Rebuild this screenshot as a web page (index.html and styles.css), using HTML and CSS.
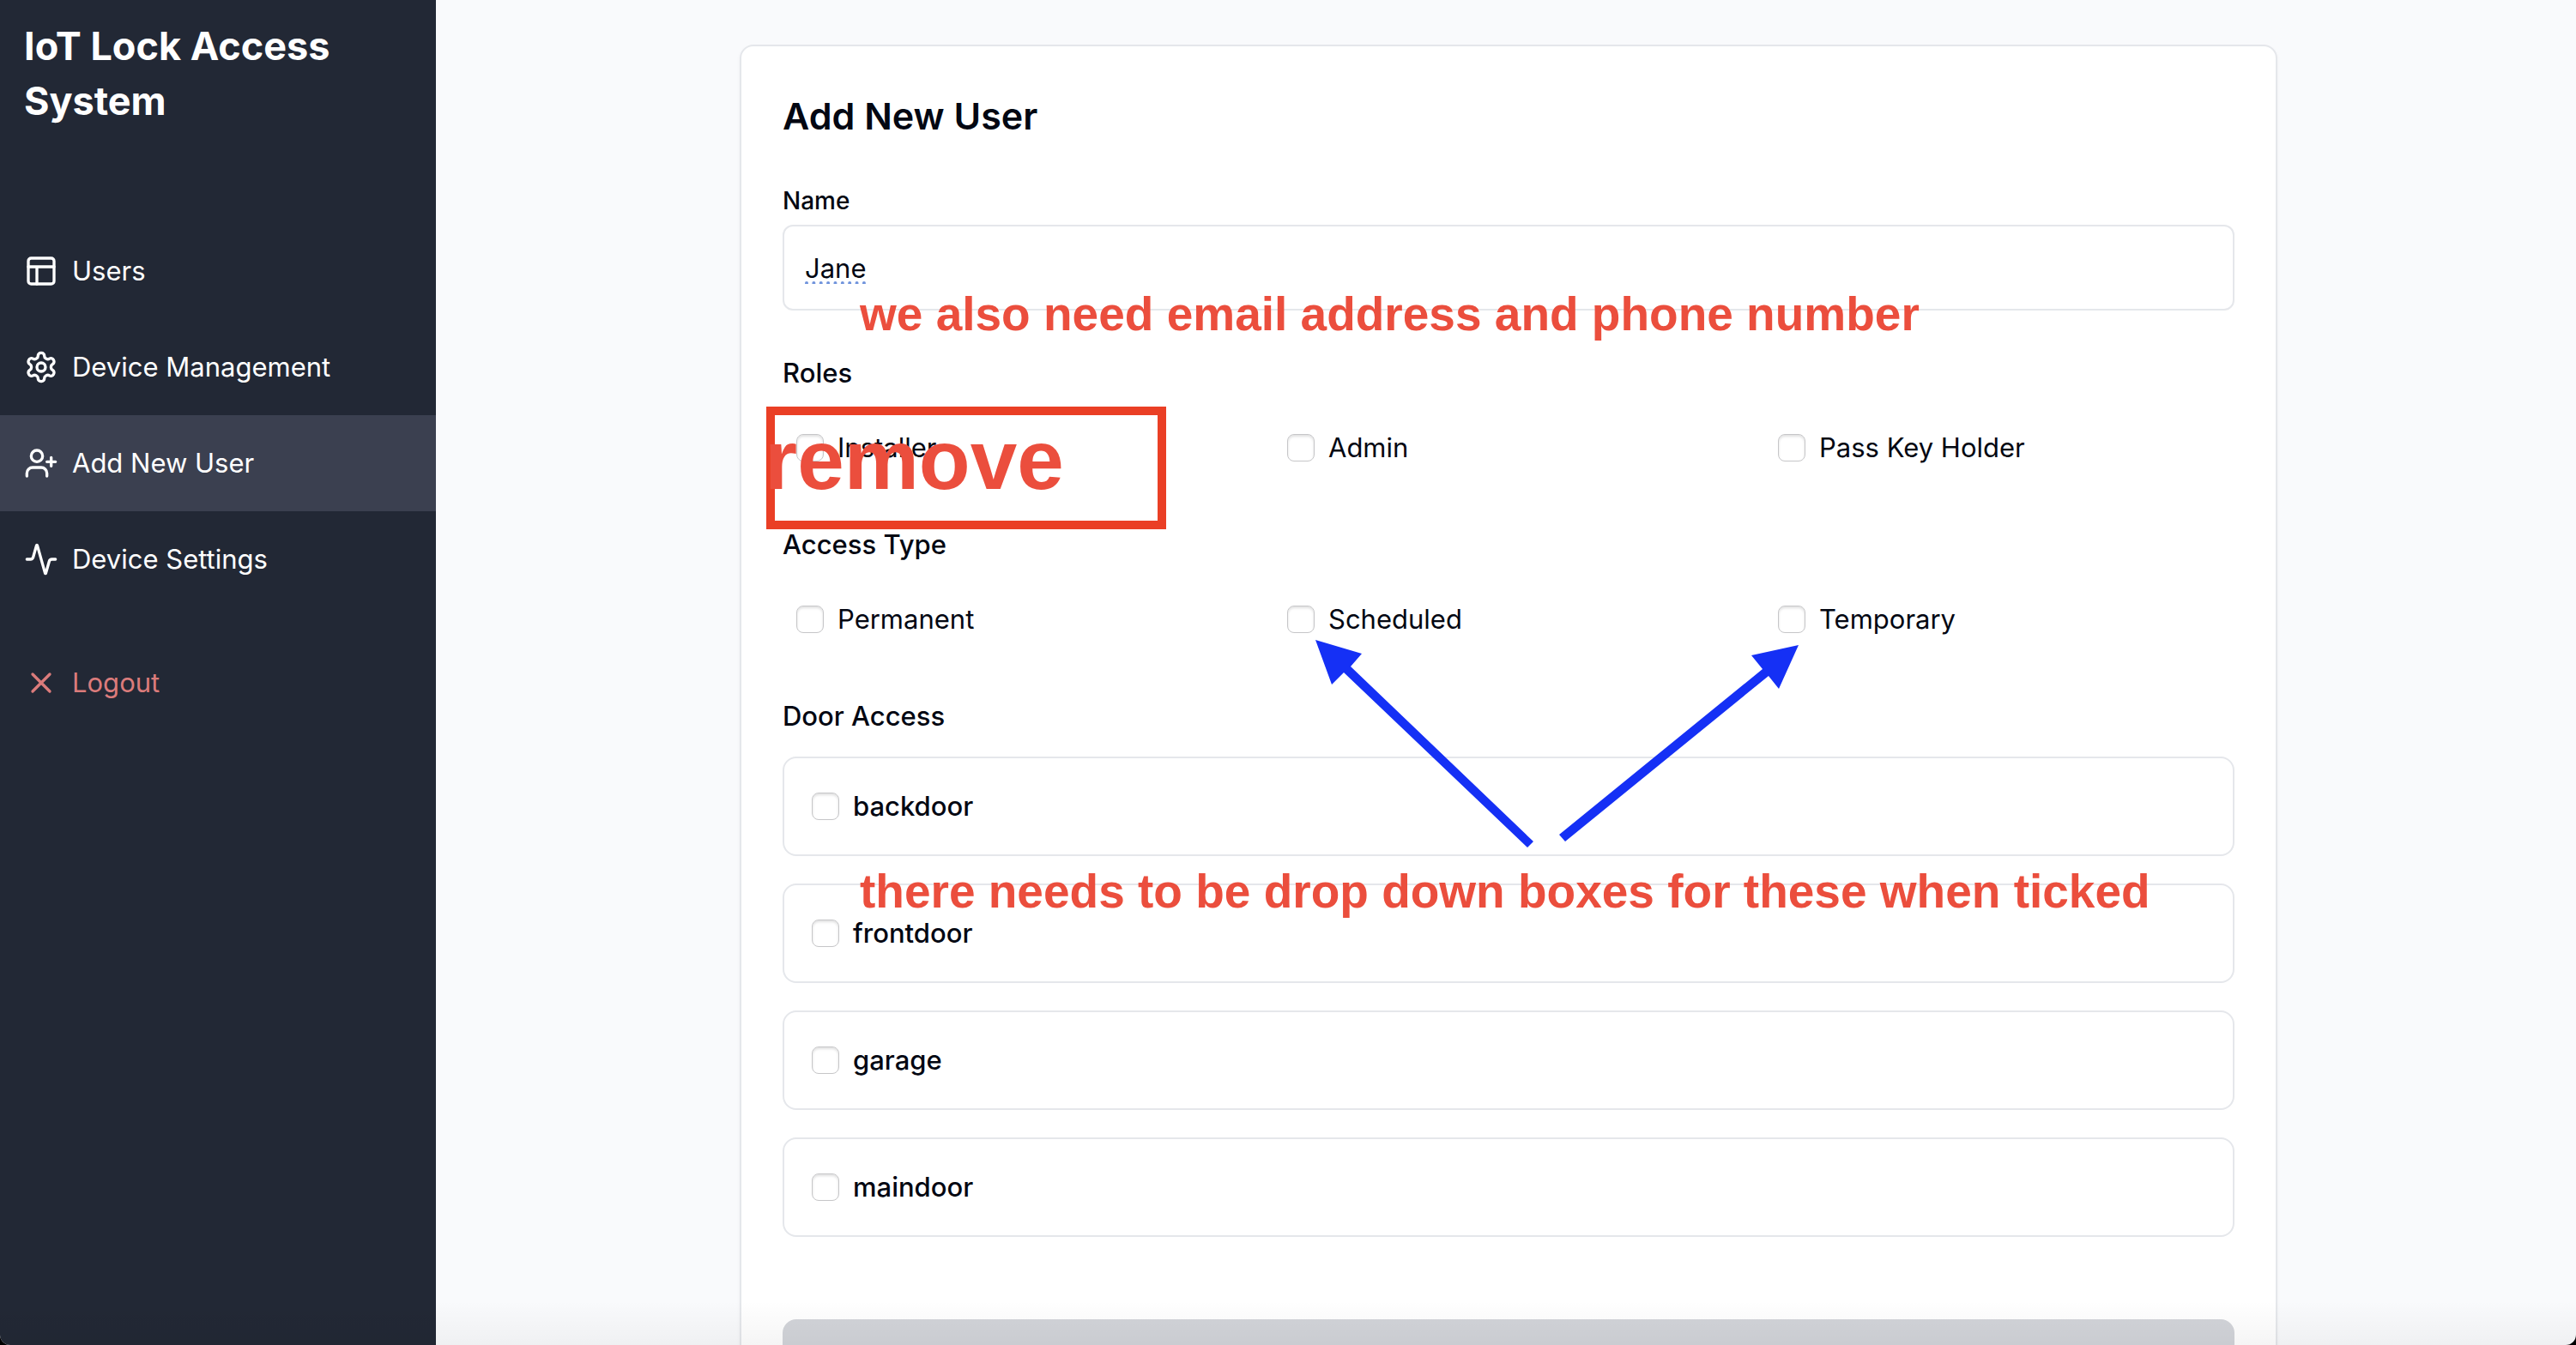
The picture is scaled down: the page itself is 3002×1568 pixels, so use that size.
FILE: index.html
```html
<!DOCTYPE html>
<html lang="en">
<head>
<meta charset="utf-8">
<title>IoT Lock Access System</title>
<link rel="stylesheet" href="styles.css">
</head>
<body>
<div class="app">
  <aside class="sidebar">
    <h1 class="brand">IoT Lock Access System</h1>
    <nav class="nav">
      <a class="nav-item" href="#users">
        <svg class="icon" viewBox="0 0 24 24"><rect x="3" y="3" width="18" height="18" rx="2"/><path d="M3 9h18M9 21V9"/></svg>
        Users
      </a>
      <a class="nav-item" href="#devices">
        <svg class="icon" viewBox="0 0 24 24"><path d="M12.22 2h-.44a2 2 0 0 0-2 2v.18a2 2 0 0 1-1 1.73l-.43.25a2 2 0 0 1-2 0l-.15-.08a2 2 0 0 0-2.73.73l-.22.38a2 2 0 0 0 .73 2.73l.15.1a2 2 0 0 1 1 1.72v.51a2 2 0 0 1-1 1.74l-.15.09a2 2 0 0 0-.73 2.73l.22.38a2 2 0 0 0 2.73.73l.15-.08a2 2 0 0 1 2 0l.43.25a2 2 0 0 1 1 1.73V20a2 2 0 0 0 2 2h.44a2 2 0 0 0 2-2v-.18a2 2 0 0 1 1-1.73l.43-.25a2 2 0 0 1 2 0l.15.08a2 2 0 0 0 2.73-.73l.22-.39a2 2 0 0 0-.73-2.73l-.15-.08a2 2 0 0 1-1-1.74v-.5a2 2 0 0 1 1-1.74l.15-.09a2 2 0 0 0 .73-2.73l-.22-.38a2 2 0 0 0-2.73-.73l-.15.08a2 2 0 0 1-2 0l-.43-.25a2 2 0 0 1-1-1.73V4a2 2 0 0 0-2-2z"/><circle cx="12" cy="12" r="3"/></svg>
        Device Management
      </a>
      <a class="nav-item active" href="#add-user" aria-current="page">
        <svg class="icon" viewBox="0 0 24 24"><path d="M16 21v-2a4 4 0 0 0-4-4H6a4 4 0 0 0-4 4v2"/><circle cx="9" cy="7" r="4"/><path d="M19 8v6M22 11h-6"/></svg>
        Add New User
      </a>
      <a class="nav-item" href="#settings">
        <svg class="icon" viewBox="0 0 24 24"><path d="M22 12h-2.48a2 2 0 0 0-1.93 1.46l-2.35 8.36a.25.25 0 0 1-.48 0L9.24 2.18a.25.25 0 0 0-.48 0l-2.35 8.36A2 2 0 0 1 4.49 12H2"/></svg>
        Device Settings
      </a>
    </nav>
    <a class="nav-item logout" href="#logout">
      <svg class="icon" viewBox="0 0 24 24"><path d="M18 6 6 18M6 6l12 12"/></svg>
      Logout
    </a>
  </aside>

  <main class="main">
    <section class="card">
      <h2 class="card-title">Add New User</h2>
      <form class="form">
        <div class="field">
          <label class="field-label" for="name">Name</label>
          <input class="text-input" id="name" type="text" value="Jane">
        </div>

        <fieldset class="group">
          <legend class="group-label">Roles</legend>
          <div class="options">
            <label class="option"><input class="check" type="checkbox">Installer</label>
            <label class="option"><input class="check" type="checkbox">Admin</label>
            <label class="option"><input class="check" type="checkbox">Pass Key Holder</label>
          </div>
        </fieldset>

        <fieldset class="group">
          <legend class="group-label">Access Type</legend>
          <div class="options">
            <label class="option"><input class="check" type="checkbox">Permanent</label>
            <label class="option"><input class="check" type="checkbox">Scheduled</label>
            <label class="option"><input class="check" type="checkbox">Temporary</label>
          </div>
        </fieldset>

        <fieldset class="group">
          <legend class="group-label">Door Access</legend>
          <div class="doors">
            <label class="door"><input class="check" type="checkbox">backdoor</label>
            <label class="door"><input class="check" type="checkbox">frontdoor</label>
            <label class="door"><input class="check" type="checkbox">garage</label>
            <label class="door"><input class="check" type="checkbox">maindoor</label>
          </div>
        </fieldset>

        <button class="submit" type="submit" aria-label="Add User" disabled></button>
      </form>

      <!-- Review notes laid over the form -->
      <div class="notes">
        <p class="note note-contact">we also need email address and phone number</p>
        <div class="note-box"></div>
        <p class="note note-remove">remove</p>
        <svg class="arrows" viewBox="1500 720 640 280">
          <polygon points="1533,746 1587,762 1574,777 1787,981 1780,988 1566,784 1552,798"/>
          <polygon points="2096,752 2041,764 2054,780 1817,973 1824,981 2061,788 2073,803"/>
        </svg>
        <p class="note note-dropdown">there needs to be drop down boxes for these when ticked</p>
      </div>
    </section>
  </main>
</div>
</body>
</html>
```
FILE: styles.css
```css
* { box-sizing: border-box; }

html { background: #000; }

body {
  margin: 0;
  font-family: Inter, "Liberation Sans", sans-serif;
  font-size: 31px;
  line-height: 50px;
  color: #030712;
}

h1, h2, p { margin: 0; }

.app {
  position: relative;
  display: flex;
  height: 100vh;
  overflow: hidden;
  border-radius: 0 0 12px 12px;
  background: #f9fafc;
}

/* Soft shade along the window's lower edge */
.app::after {
  content: "";
  position: absolute;
  inset: auto 0 0 0;
  height: 52px;
  background: linear-gradient(transparent, rgba(0, 0, 0, 0.04));
  pointer-events: none;
}

/* Sidebar */
.sidebar {
  flex: 0 0 508px;
  background: #222835;
  color: #fff;
}

.brand {
  padding: 22px 28px 0;
  font-size: 45px;
  line-height: 64px;
  font-weight: 700;
}

.nav { margin-top: 110px; }

.nav-item {
  display: flex;
  align-items: center;
  gap: 16px;
  height: 112px;
  padding: 0 28px;
  color: inherit;
  text-decoration: none;
}

.nav-item.active { background: #3b4050; }

.nav-item.logout {
  margin-top: 32px;
  color: #db7b7b;
}

.icon {
  flex: none;
  width: 40px;
  height: 40px;
  fill: none;
  stroke: currentColor;
  stroke-width: 2;
  stroke-linecap: round;
  stroke-linejoin: round;
}

/* Form card */
.main {
  flex: 1;
  padding: 52px 48px 0 54px;
}

.card {
  position: relative;
  max-width: 1792px;
  margin: 0 auto;
  padding: 48px;
  border: 2px solid #e5e7eb;
  border-radius: 16px;
  background: #fff;
  box-shadow: 0 2px 4px rgba(0, 0, 0, 0.04);
}

.card-title {
  font-size: 43px;
  line-height: 66px;
  font-weight: 600;
}

.form {
  display: flex;
  flex-direction: column;
  gap: 48px;
  margin-top: 46px;
}

.field {
  display: flex;
  flex-direction: column;
  gap: 8px;
}

.field-label {
  font-size: 28px;
  line-height: 40px;
  font-weight: 500;
}

.text-input {
  width: 100%;
  height: 100px;
  padding: 0 24px;
  border: 2px solid #e5e7eb;
  border-radius: 12px;
  background: #fff;
  font: inherit;
  color: inherit;
  text-decoration: underline dotted #6f93dc 4px;
  text-underline-offset: 5px;
}

.group {
  min-width: 0;
  margin: 0;
  padding: 0;
  border: 0;
}

.group-label {
  padding: 0;
  font-weight: 500;
}

.options {
  display: grid;
  grid-template-columns: repeat(3, 1fr);
  column-gap: 24px;
  margin-top: 30px;
  padding-bottom: 8px;
}

.option {
  display: flex;
  align-items: center;
  gap: 16px;
  height: 64px;
  padding: 0 16px;
}

.check {
  appearance: none;
  flex: none;
  width: 32px;
  height: 32px;
  margin: 0;
  border: 1px solid #c6c6c8;
  border-radius: 8px;
  background: #fff;
  box-shadow: inset 0 2px 3px rgba(0, 0, 0, 0.12);
}

.doors {
  display: flex;
  flex-direction: column;
  gap: 32px;
  margin-top: 22px;
}

.door {
  display: flex;
  align-items: center;
  gap: 16px;
  height: 116px;
  padding: 0 32px;
  border: 2px solid #e5e7eb;
  border-radius: 16px;
  font-weight: 500;
}

.submit {
  height: 96px;
  margin-top: 48px;
  border: 0;
  border-radius: 16px;
  background: #d2d4d9;
}

/* Review notes */
.notes {
  position: absolute;
  inset: 0;
  pointer-events: none;
}

.note {
  position: absolute;
  font-family: "Liberation Sans", Arial, sans-serif;
  font-size: 55px;
  line-height: 64px;
  font-weight: 700;
  white-space: nowrap;
  color: #eb4e3d;
}

.note-contact { left: 138px; top: 280px; }

.note-dropdown { left: 138px; top: 953px; }

.note-remove {
  left: 27px;
  top: 426px;
  font-size: 98px;
  line-height: 112px;
}

.note-box {
  position: absolute;
  left: 29px;
  top: 420px;
  width: 466px;
  height: 143px;
  border: 10px solid #ea3f25;
}

.arrows {
  position: absolute;
  left: 636px;
  top: 666px;
  width: 640px;
  height: 280px;
  fill: #1530f5;
}
```
